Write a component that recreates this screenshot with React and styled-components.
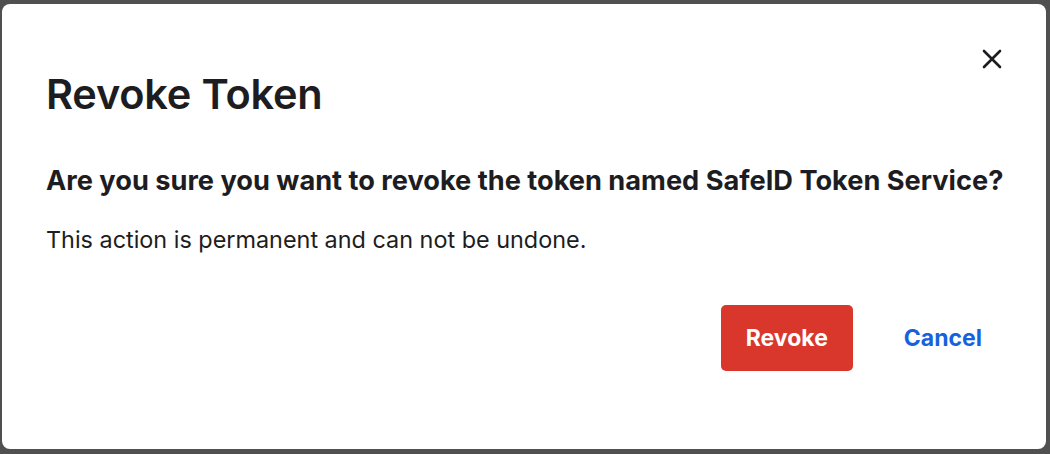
import React from "react";
import styled, { createGlobalStyle } from "styled-components";

const GlobalStyle = createGlobalStyle`
  html, body {
    margin: 0;
    padding: 0;
    background: #505050;
  }
  body {
    font-family: Inter, "Noto Sans", sans-serif;
    -webkit-font-smoothing: antialiased;
  }
`;

const Backdrop = styled.div`
  width: 1050px;
  height: 454px;
  box-sizing: border-box;
  padding: 4px 4px 5px 2px;
  display: flex;
`;

const Dialog = styled.div`
  position: relative;
  flex: 1;
  min-width: 0;
  background: #ffffff;
  border-radius: 8px;
  padding: 65px 44px 0 44px;
  box-sizing: border-box;
  display: flex;
  flex-direction: column;
  color: #1d1d21;
`;

const CloseButton = styled.button`
  position: absolute;
  top: 39px;
  right: 38px;
  width: 32px;
  height: 32px;
  border: 0;
  background: transparent;
  padding: 0;
  display: flex;
  align-items: center;
  justify-content: center;
  cursor: pointer;
`;

const Title = styled.h1`
  margin: 0;
  font-size: 41.5px;
  line-height: 50px;
  font-weight: 600;
  letter-spacing: -0.2px;
`;

const Question = styled.h2`
  margin: 45px 0 0;
  font-size: 27.2px;
  line-height: 34px;
  font-weight: 700;
  white-space: nowrap;
`;

const Body = styled.p`
  margin: 27px 0 0;
  font-size: 23.4px;
  line-height: 30px;
  font-weight: 400;
`;

const Footer = styled.div`
  display: flex;
  justify-content: flex-end;
  align-items: center;
  margin-top: 50px;
`;

const Button = styled.button`
  height: 66px;
  border-radius: 5px;
  border: 0;
  font-family: inherit;
  font-size: 23px;
  font-weight: 700;
  padding: 0 ${({ $primary }) => ($primary ? "25px" : "20px")};
  background: ${({ $primary }) => ($primary ? "#d9372c" : "transparent")};
  color: ${({ $primary }) => ($primary ? "#ffffff" : "#1662dd")};
  margin-left: ${({ $primary }) => ($primary ? "0" : "31px")};
  cursor: pointer;
`;

export default function App() {
  return (
    <>
      <GlobalStyle />
      <Backdrop>
        <Dialog>
          <CloseButton aria-label="Close">
            <svg width="20" height="20" viewBox="0 0 20 20">
              <path
                d="M2 2 L18 18 M18 2 L2 18"
                stroke="#1d1d21"
                strokeWidth="2.6"
                strokeLinecap="round"
              />
            </svg>
          </CloseButton>
          <Title>Revoke Token</Title>
          <Question>
            Are you sure you want to revoke the token named SafeID Token Service?
          </Question>
          <Body>This action is permanent and can not be undone.</Body>
          <Footer>
            <Button $primary>Revoke</Button>
            <Button>Cancel</Button>
          </Footer>
        </Dialog>
      </Backdrop>
    </>
  );
}
